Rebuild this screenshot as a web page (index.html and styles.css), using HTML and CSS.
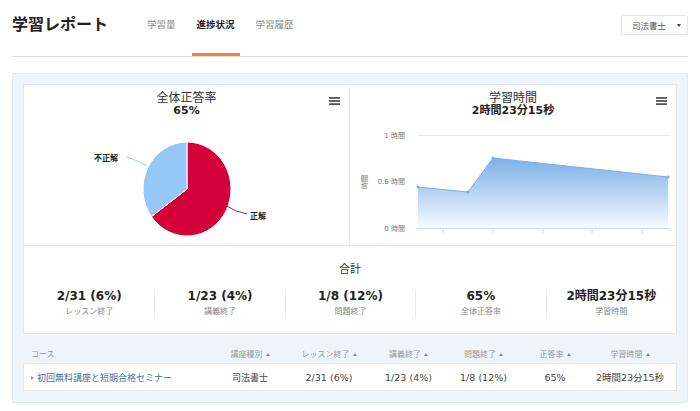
FILE: index.html
```html
<!DOCTYPE html>
<html lang="ja">
<head>
<meta charset="utf-8">
<title>学習レポート</title>
<link rel="stylesheet" href="styles.css">
</head>
<body>
<header class="top">
  <h1 class="title">学習レポート</h1>
  <nav class="tabs">
    <a class="tab">学習量</a>
    <a class="tab active">進捗状況</a>
    <a class="tab">学習履歴</a>
  </nav>
  <div class="select"><span>司法書士</span><span class="caret"></span></div>
</header>

<section class="panel">
  <div class="card">
    <div class="charts">
      <div class="chart chart-left">
        <div class="chart-head">
          <div class="chart-title">全体正答率</div>
          <div class="chart-sub">65%</div>
        </div>
        <svg class="menu" width="11" height="8" viewBox="0 0 11 8"><rect x="0" y="0" width="11" height="1.8"/><rect x="0" y="3.1" width="11" height="1.8"/><rect x="0" y="6.2" width="11" height="1.8"/></svg>
        <svg class="plot" width="325" height="124">
          <path d="M163 68 L163 21 A44 47 0 1 1 127.4 95.6 Z" fill="#d3003a" stroke="#fff" stroke-width="1"/>
          <path d="M163 68 L127.4 95.6 A44 47 0 0 1 163 21 Z" fill="#95c8f6" stroke="#fff" stroke-width="1"/>
          <path d="M103 36 Q113 39 123 45" stroke="#a8d0f2" fill="none"/>
          <path d="M201 84 Q211 91 223 93" stroke="#9c2e4c" fill="none"/>
          <text x="94" y="40" text-anchor="end" class="pie-label">不正解</text>
          <text x="226" y="98" class="pie-label">正解</text>
        </svg>
      </div>
      <div class="chart">
        <div class="chart-head">
          <div class="chart-title">学習時間</div>
          <div class="chart-sub">2時間23分15秒</div>
        </div>
        <svg class="menu" width="11" height="8" viewBox="0 0 11 8"><rect x="0" y="0" width="11" height="1.8"/><rect x="0" y="3.1" width="11" height="1.8"/><rect x="0" y="6.2" width="11" height="1.8"/></svg>
        <svg class="plot" width="326" height="124">
          <defs>
            <linearGradient id="area" gradientUnits="userSpaceOnUse" x1="0" y1="37" x2="0" y2="107">
              <stop offset="0" stop-color="#7cb0e6"/>
              <stop offset="1" stop-color="#f6fafe"/>
            </linearGradient>
          </defs>
          <line x1="67" y1="14.5" x2="320" y2="14.5" stroke="#e8e8e8"/>
          <path d="M68 66 L118 71 L143 37 L318 56 L318 107 L68 107 Z" fill="url(#area)"/>
          <path d="M68 66 L118 71 L143 37 L318 56" fill="none" stroke="#7aafe6" stroke-width="1"/>
          <circle cx="68" cy="66" r="1.5" fill="#7aafe6"/>
          <circle cx="118" cy="71" r="1.5" fill="#7aafe6"/>
          <circle cx="143" cy="37" r="1.5" fill="#7aafe6"/>
          <circle cx="318" cy="56" r="1.5" fill="#7aafe6"/>
          <line x1="67" y1="107.5" x2="320" y2="107.5" stroke="#d3dbe8"/>
          <path d="M93 107.5v5 M143 107.5v5 M193 107.5v5 M242 107.5v5 M292 107.5v5" stroke="#d3dbe8"/>
          <text x="55" y="14.5" class="axis" text-anchor="end" dominant-baseline="central">1 時間</text>
          <text x="55" y="61" class="axis" text-anchor="end" dominant-baseline="central">0.6 時間</text>
          <text x="55" y="107.5" class="axis" text-anchor="end" dominant-baseline="central">0 時間</text>
          <text transform="translate(15 61) rotate(-90)" class="axis" text-anchor="middle" dominant-baseline="central">時間</text>
        </svg>
      </div>
    </div>
    <div class="totals">
      <div class="totals-title">合計</div>
      <div class="stats">
        <div class="stat"><div class="stat-value">2/31 (6%)</div><div class="stat-label">レッスン終了</div></div>
        <div class="stat"><div class="stat-value">1/23 (4%)</div><div class="stat-label">講義終了</div></div>
        <div class="stat"><div class="stat-value">1/8 (12%)</div><div class="stat-label">問題終了</div></div>
        <div class="stat"><div class="stat-value">65%</div><div class="stat-label">全体正答率</div></div>
        <div class="stat"><div class="stat-value">2時間23分15秒</div><div class="stat-label">学習時間</div></div>
      </div>
    </div>
  </div>

  <div class="table">
    <div class="thead">
      <div class="course">コース</div>
      <div class="sort">講座種別</div>
      <div class="sort">レッスン終了</div>
      <div class="sort">講義終了</div>
      <div class="sort">問題終了</div>
      <div class="sort">正答率</div>
      <div class="sort">学習時間</div>
    </div>
    <div class="trow">
      <div class="course"><a class="link">初回無料講座と短期合格セミナー</a></div>
      <div class="kanji">司法書士</div>
      <div>2/31 (6%)</div>
      <div>1/23 (4%)</div>
      <div>1/8 (12%)</div>
      <div>65%</div>
      <div>2時間23分15秒</div>
    </div>
  </div>
</section>
</body>
</html>
```

FILE: styles.css
```css
* { box-sizing: border-box; }

body {
  margin: 0;
  background: #fff;
  color: #333;
  font-family: "DejaVu Sans", "Noto Sans CJK JP", sans-serif;
}

/* header */
.top {
  display: flex;
  align-items: flex-start;
  height: 57px;
  margin: 0 12px;
  border-bottom: 1px solid #dedede;
}
.title {
  margin: 13px 0 0;
  font-family: "Noto Sans CJK JP", sans-serif;
  font-size: 16px;
  line-height: 20px;
  font-weight: 700;
  color: #222;
}
.tabs {
  display: flex;
  gap: 11px;
  margin-left: 34px;
  align-self: stretch;
}
.tab {
  padding: 18px 5px 0;
  font-family: "Noto Sans CJK JP", sans-serif;
  font-size: 9.5px;
  line-height: 12px;
  color: #8a8a8a;
  border-bottom: 3px solid transparent;
  text-decoration: none;
}
.tab.active {
  color: #222;
  font-weight: 700;
  border-bottom-color: #e8873a;
}
.select {
  display: flex;
  align-items: center;
  justify-content: space-between;
  width: 67px;
  height: 20px;
  margin: 15px 0 0 auto;
  padding: 0 6px 0 10px;
  border: 1px solid #e6e6e6;
  border-radius: 2px;
  font-family: "Noto Sans CJK JP", sans-serif;
  font-size: 8.5px;
  color: #555;
}
.caret {
  width: 0;
  height: 0;
  border-left: 2.5px solid transparent;
  border-right: 2.5px solid transparent;
  border-top: 3px solid #444;
}

/* panel */
.panel {
  margin: 16px 12px 0;
  padding: 10px 10px 11px;
  background: #eef5fa;
  border: 1px solid #e1ebf2;
  border-radius: 2px;
}
.card {
  background: #fff;
  border: 1px solid #e1e8ee;
}
.charts {
  display: grid;
  grid-template-columns: 1fr 1fr;
  height: 161px;
  border-bottom: 1px solid #e6ebef;
}
.chart { position: relative; }
.chart-left { border-right: 1px solid #e6ebef; }
.chart-head {
  height: 36px;
  padding-top: 5px;
  text-align: center;
}
.chart-title {
  font-family: "Noto Sans CJK JP", sans-serif;
  font-size: 12px;
  line-height: 14px;
  color: #333;
}
.chart-sub {
  font-size: 11px;
  line-height: 14px;
  font-weight: 700;
  color: #222;
}
.menu {
  position: absolute;
  top: 12px;
  right: 9px;
  fill: #555;
}
.plot { display: block; }
.pie-label {
  font-family: "Noto Sans CJK JP", sans-serif;
  font-size: 8px;
  font-weight: 700;
  fill: #222;
}
.axis {
  font-family: "DejaVu Sans", "Noto Sans CJK JP", sans-serif;
  font-size: 7px;
  fill: #777;
}

/* totals */
.totals {
  height: 87px;
  padding-top: 15px;
}
.totals-title {
  text-align: center;
  font-family: "Noto Sans CJK JP", sans-serif;
  font-size: 11px;
  line-height: 14px;
  color: #333;
}
.stats {
  display: grid;
  grid-template-columns: repeat(5, 1fr);
  margin-top: 15px;
}
.stat {
  height: 28px;
  text-align: center;
  border-left: 1px solid #e8ebee;
}
.stat:first-child { border-left: 0; }
.stat-value {
  font-size: 12px;
  line-height: 13px;
  font-weight: 700;
  color: #222;
}
.stat-label {
  margin-top: 2px;
  font-family: "Noto Sans CJK JP", sans-serif;
  font-size: 8px;
  line-height: 12px;
  color: #888;
}

/* table */
.thead, .trow {
  display: grid;
  grid-template-columns: 187px 78px 80px 79px 71px 72px 78px;
  text-align: center;
}
.thead {
  padding: 14px 0 4px;
  border-left: 1px solid transparent;
  border-right: 1px solid transparent;
  font-family: "Noto Sans CJK JP", sans-serif;
  font-size: 8px;
  line-height: 11px;
  color: #999;
}
.trow {
  height: 28px;
  align-items: center;
  background: #fff;
  border: 1px solid #e2e8ec;
  font-size: 9.5px;
  color: #444;
}
.course {
  text-align: left;
  padding-left: 7px;
}
.sort::after {
  content: "";
  display: inline-block;
  margin-left: 3px;
  vertical-align: 1px;
  border-left: 2.5px solid transparent;
  border-right: 2.5px solid transparent;
  border-bottom: 3px solid #888;
}
.kanji { font-size: 9px; }
.link {
  color: #3a6ea5;
  font-size: 9px;
  text-decoration: none;
}
.link::before {
  content: "";
  display: inline-block;
  margin-right: 3px;
  vertical-align: 1px;
  border-top: 2.5px solid transparent;
  border-bottom: 2.5px solid transparent;
  border-left: 3px solid #e8893c;
}
```
